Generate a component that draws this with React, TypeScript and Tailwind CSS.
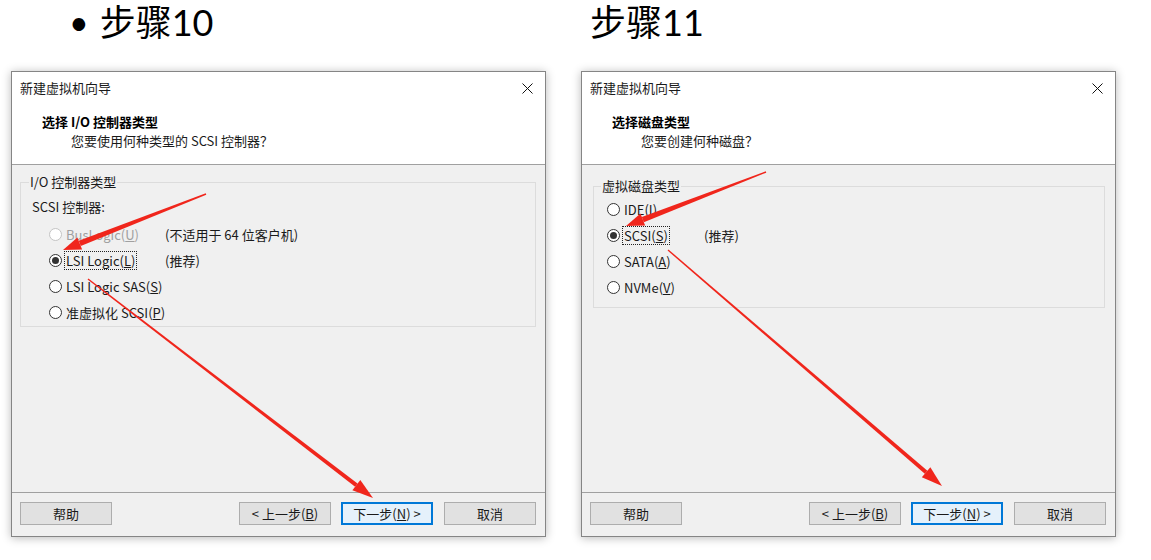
import type { ReactNode } from "react";

const ui = "font-['Noto_Sans_CJK_SC',sans-serif] text-[13px] text-[#1a1a1a]";

const Radio = ({ checked, disabled }: { checked?: boolean; disabled?: boolean }) => (
  <span
    className={
      disabled
        ? "w-[13px] h-[13px] rounded-full border border-[#c4c4c4] bg-white flex items-center justify-center shrink-0"
        : "w-[13px] h-[13px] rounded-full border border-[#333333] bg-white flex items-center justify-center shrink-0"
    }>
    {checked && <span className="w-[7px] h-[7px] rounded-full bg-[#333333]" />}
  </span>
);

const Option = ({
  label,
  note,
  checked,
  disabled,
  focused,
  labelWidth,
}: {
  label: ReactNode;
  note?: string;
  checked?: boolean;
  disabled?: boolean;
  focused?: boolean;
  labelWidth: string;
}) => (
  <div className="h-[26px] flex items-center">
    <Radio checked={checked} disabled={disabled} />
    <span className={`ml-[2px] ${labelWidth} leading-[17px] flex`}>
      <span
        className={
          focused
            ? "border border-dotted border-[#222] px-[1px]"
            : disabled
              ? "border border-transparent px-[1px] text-[#a0a0a0]"
              : "border border-transparent px-[1px]"
        }>
        {label}
      </span>
    </span>
    {note && <span className="leading-[17px]">{note}</span>}
  </div>
);

interface WizardProps {
  title: string;
  subtitle: string;
  children: ReactNode;
}

const Wizard = ({ title, subtitle, children }: WizardProps) => (
  <div className={`w-[535px] h-[466px] border border-[#858585] bg-[#f0f0f0] flex flex-col shadow-[0_1px_9px_rgba(0,0,0,0.28)] ${ui}`}>
    {/* Title bar + header */}
    <div className="bg-white h-[92px] shrink-0">
      <div className="h-[32px] flex items-center justify-between px-[8px]">
        <span>新建虚拟机向导</span>
        <svg width="11" height="11" viewBox="0 0 11 11" className="mr-[4px]">
          <path d="M0.5 0.5 L10.5 10.5 M10.5 0.5 L0.5 10.5" stroke="#111" strokeWidth="1" />
        </svg>
      </div>
      <div className="pl-[30px] mt-[9px] leading-[18px] font-bold text-black">{title}</div>
      <div className="pl-[59px] mt-[1px] leading-[18px]">{subtitle}</div>
    </div>
    <div className="border-t border-[#a0a0a0]" />

    {/* Body */}
    <div className="flex-1 px-[8px]">{children}</div>

    {/* Footer */}
    <div className="h-[44px] border-t border-[#a0a0a0] pt-[9px] pl-[8px] pr-[9px] flex">
      <button className="w-[92px] h-[23px] bg-[#e1e1e1] border border-[#adadad]">帮助</button>
      <div className="ml-auto flex gap-[10px]">
        <button className="w-[92px] h-[23px] bg-[#e1e1e1] border border-[#adadad]">
          &lt; 上一步(<u>B</u>)
        </button>
        <button className="w-[92px] h-[23px] bg-[#e5f1fb] border-2 border-[#0078d7]">
          下一步(<u>N</u>) &gt;
        </button>
        <button className="w-[92px] h-[23px] bg-[#e1e1e1] border border-[#adadad] ml-[1px]">取消</button>
      </div>
    </div>
  </div>
);

type Arrow = { x1: number; y1: number; x2: number; y2: number; w: number; head: number; hw: number };

const ArrowShape = ({ a }: { a: Arrow }) => {
  const dx = a.x2 - a.x1;
  const dy = a.y2 - a.y1;
  const len = Math.hypot(dx, dy);
  const ux = dx / len;
  const uy = dy / len;
  const nx = -uy;
  const ny = ux;
  const bx = a.x2 - ux * a.head;
  const by = a.y2 - uy * a.head;
  const body = [
    [a.x1 + nx * 0.7, a.y1 + ny * 0.7],
    [bx + nx * a.w, by + ny * a.w],
    [bx - nx * a.w, by - ny * a.w],
    [a.x1 - nx * 0.7, a.y1 - ny * 0.7],
  ];
  const tip = [
    [a.x2, a.y2],
    [bx + nx * a.hw, by + ny * a.hw],
    [bx - nx * a.hw, by - ny * a.hw],
  ];
  const pts = (p: number[][]) => p.map((q) => q.join(",")).join(" ");
  return (
    <g fill="#f0261c">
      <polygon points={pts(body)} />
      <polygon points={pts(tip)} />
    </g>
  );
};

const arrows: Arrow[] = [
  { x1: 206, y1: 194, x2: 63, y2: 250, w: 2.8, head: 18, hw: 6.5 },
  { x1: 88, y1: 279, x2: 373, y2: 498, w: 2, head: 21, hw: 6.5 },
  { x1: 766, y1: 172, x2: 626, y2: 226, w: 2.8, head: 18, hw: 6.5 },
  { x1: 668, y1: 250, x2: 942, y2: 486, w: 2, head: 21, hw: 6.5 },
];

export default function App() {
  return (
    <div className="w-[1151px] h-[560px] bg-white relative overflow-hidden">
      {/* Step headings */}
      <div className="h-[71px] flex pl-[11px] font-['Lato','Noto_Sans_CJK_SC',sans-serif] text-[36px] text-black leading-[44px]">
        <div className="w-[570px] flex items-start pl-[58px]">
          <span className="text-[34px] mr-[11px]">•</span>
          <span>步骤10</span>
        </div>
        <div className="pl-[9px]">步骤11</div>
      </div>

      {/* Wizard dialogs */}
      <div className="flex pl-[11px] gap-[35px]">
        <Wizard title="选择 I/O 控制器类型" subtitle="您要使用何种类型的 SCSI 控制器？">
          <fieldset className="mt-[9px] w-[516px] border border-[#dcdcdc] px-[8px] pb-[1px]">
            <legend className="px-[1px] leading-[16px]">I/O 控制器类型</legend>
            <div className="mt-[8px] ml-[3px] leading-[18px]">SCSI 控制器:</div>
            <div className="mt-[5px] ml-[20px]">
              <Option
                label={<>BusLogic(<u>U</u>)</>}
                note="(不适用于 64 位客户机)"
                disabled
                labelWidth="w-[101px]"
              />
              <Option label={<>LSI Logic(<u>L</u>)</>} note="(推荐)" checked focused labelWidth="w-[101px]" />
              <Option label={<>LSI Logic SAS(<u>S</u>)</>} labelWidth="w-auto" />
              <Option label={<>准虚拟化 SCSI(<u>P</u>)</>} labelWidth="w-auto" />
            </div>
          </fieldset>
        </Wizard>

        <Wizard title="选择磁盘类型" subtitle="您要创建何种磁盘？">
          <fieldset className="mt-[13px] ml-[3px] w-[512px] border border-[#dcdcdc] px-[7px] pb-[7px]">
            <legend className="px-[1px] leading-[16px]">虚拟磁盘类型</legend>
            <div className="mt-[2px] ml-[6px]">
              <Option label={<>IDE(<u>I</u>)</>} labelWidth="w-auto" />
              <Option label={<>SCSI(<u>S</u>)</>} note="(推荐)" checked focused labelWidth="w-[82px]" />
              <Option label={<>SATA(<u>A</u>)</>} labelWidth="w-auto" />
              <Option label={<>NVMe(<u>V</u>)</>} labelWidth="w-auto" />
            </div>
          </fieldset>
        </Wizard>
      </div>

      {/* Red annotation arrows */}
      <svg className="absolute inset-0 pointer-events-none" width="1151" height="560">
        {arrows.map((a, i) => (
          <ArrowShape key={i} a={a} />
        ))}
      </svg>
    </div>
  );
}
